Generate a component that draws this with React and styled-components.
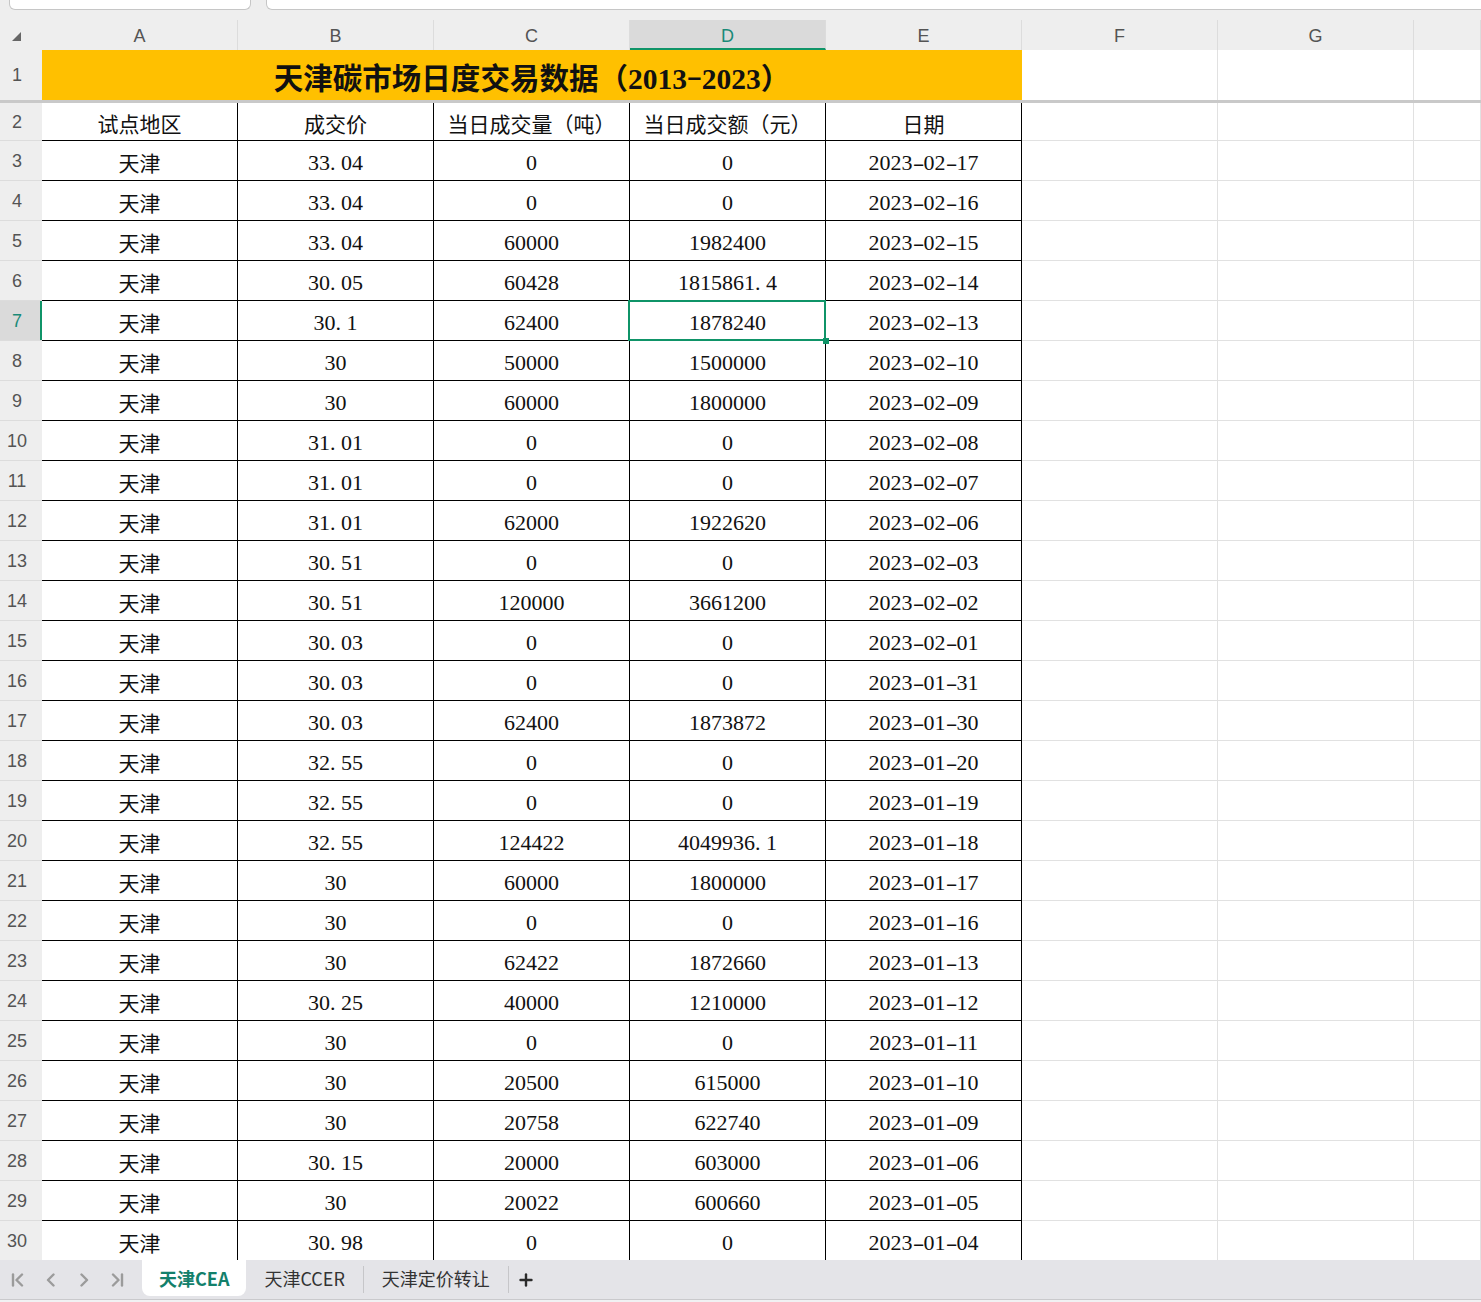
import React from "react";
import styled, { createGlobalStyle, css } from "styled-components";

const GlobalStyle = createGlobalStyle`
  html, body {
    margin: 0;
    padding: 0;
    overflow: hidden;
    background: #ffffff;
  }
  body {
    font-family: "Liberation Sans", "Noto Sans CJK SC", sans-serif;
    text-spacing-trim: space-all;
  }
`;

const COLS = "42px repeat(7, 196px) 1fr";
const GREEN = "#0f9468";
const TEAL = "#1a8a78";

const Page = styled.div`
  display: flex;
  flex-direction: column;
  height: 100vh;
  width: 100vw;
`;

const TopStrip = styled.div`
  display: flex;
  align-items: flex-start;
  gap: 15px;
  height: 20px;
  padding-left: 9px;
  background: #eeeeee;
  overflow: hidden;
  flex-shrink: 0;
`;

const InputBox = styled.div`
  height: 9px;
  background: #ffffff;
  border: 1px solid #c6c6c6;
  border-top: none;
  border-radius: 0 0 6px 6px;
  ${(p) =>
    p.$wide
      ? css`
          flex: 1;
          margin-right: -12px;
        `
      : css`
          width: 240px;
        `}
`;

const Sheet = styled.div`
  flex: 1;
  overflow: hidden;
  background: #ffffff;
`;

const Row = styled.div`
  display: grid;
  grid-template-columns: ${COLS};
  height: ${(p) => p.$h}px;
`;

const HeaderRow = styled(Row)`
  background: #eeeeee;
`;

const Corner = styled.div`
  display: flex;
  align-items: center;
  padding-left: 12px;
  padding-top: 2px;
`;

const ColHead = styled.div`
  display: flex;
  align-items: center;
  justify-content: center;
  padding-top: 2px;
  border-right: 1px solid #dcdcdc;
  font-size: 18px;
  color: #545454;
  box-sizing: border-box;
  ${(p) =>
    p.$active &&
    css`
      background: #dadada;
      color: ${TEAL};
      border-bottom: 2px solid ${GREEN};
      padding-top: 4px;
    `}
`;

const RowHead = styled.div`
  display: flex;
  align-items: center;
  justify-content: center;
  padding-right: 8px;
  padding-top: 2px;
  background: #eeeeee;
  border-bottom: 1px solid ${(p) => (p.$last ? "transparent" : "#dcdcdc")};
  font-size: 18px;
  color: #545454;
  box-sizing: border-box;
  ${(p) =>
    p.$active &&
    css`
      background: #dadada;
      color: ${TEAL};
      box-shadow: inset -2px 0 0 ${GREEN};
    `}
`;

const Cell = styled.div`
  position: relative;
  display: flex;
  align-items: center;
  justify-content: center;
  padding-top: ${(p) => (p.$text ? 2 : 4)}px;
  box-sizing: border-box;
  font-family: "Liberation Serif", "Noto Sans CJK SC", serif;
  font-size: ${(p) => (p.$text ? 21 : 22)}px;
  color: #111111;
  white-space: nowrap;
  border-right: 1px solid ${(p) => (p.$blank ? "#e1e1e1" : "#000000")};
  border-bottom: 1px solid ${(p) => (p.$blank ? "#e1e1e1" : "#000000")};
  ${(p) =>
    p.$selected &&
    css`
      &::after {
        content: "";
        position: absolute;
        top: -1px;
        left: -2px;
        right: -1px;
        bottom: -1px;
        border: 2px solid ${GREEN};
        pointer-events: none;
      }
      &::before {
        content: "";
        position: absolute;
        right: -4px;
        bottom: -4px;
        width: 6px;
        height: 6px;
        background: ${GREEN};
        z-index: 2;
      }
    `}
`;

const TitleCell = styled.div`
  grid-column: span 5;
  display: flex;
  align-items: center;
  justify-content: center;
  padding-top: 2px;
  box-sizing: border-box;
  background: #ffc000;
  font-family: "Liberation Serif", "Noto Sans CJK SC", serif;
  font-weight: 700;
  font-size: 29.5px;
  color: #111111;
`;

const BlankTop = styled.div`
  border-right: 1px solid #e1e1e1;
`;

const FreezeLine = styled.div`
  height: 3px;
  background: #c9c9c9;
`;

const Dot = styled.span`
  display: inline-block;
  width: 0.5em;
  text-align: left;
`;

const Dash = styled.span`
  display: inline-block;
  width: 0.5em;
  text-align: center;
  transform: scaleX(1.6);
`;

const TabBar = styled.div`
  display: flex;
  align-items: flex-start;
  height: 39px;
  background: #e4e4e8;
  border-bottom: 1px solid #c9c9cc;
  flex-shrink: 0;
`;

const TabFoot = styled.div`
  height: 2px;
  background: #f1f1f3;
  flex-shrink: 0;
`;

const NavGroup = styled.div`
  display: flex;
  align-items: center;
  height: 39px;
  width: 142px;
  padding-left: 11px;
  gap: 19px;
  box-sizing: border-box;
  color: #9b9b9b;
`;

const NavBtn = styled.span`
  display: flex;
  width: 14px;
  height: 14px;
`;

const Tab = styled.div`
  display: flex;
  align-items: center;
  height: 36px;
  padding: 0 ${(p) => (p.$active ? 17 : 18)}px;
  font-family: "Noto Sans CJK SC", "Liberation Sans", sans-serif;
  font-size: 18px;
  color: #333333;
  ${(p) =>
    p.$active &&
    css`
      background: #ffffff;
      border-radius: 0 0 8px 8px;
      color: #13806b;
      font-weight: 700;
    `}
`;

const TabSep = styled.div`
  width: 1px;
  height: 27px;
  margin-top: 6px;
  background: #c6c6c9;
`;

const AddBtn = styled.div`
  display: flex;
  align-items: center;
  height: 39px;
  padding-left: 10px;
  color: #2b2b2b;
`;

const rows = [
  ["33.04", "0", "0", "2023-02-17"],
  ["33.04", "0", "0", "2023-02-16"],
  ["33.04", "60000", "1982400", "2023-02-15"],
  ["30.05", "60428", "1815861.4", "2023-02-14"],
  ["30.1", "62400", "1878240", "2023-02-13"],
  ["30", "50000", "1500000", "2023-02-10"],
  ["30", "60000", "1800000", "2023-02-09"],
  ["31.01", "0", "0", "2023-02-08"],
  ["31.01", "0", "0", "2023-02-07"],
  ["31.01", "62000", "1922620", "2023-02-06"],
  ["30.51", "0", "0", "2023-02-03"],
  ["30.51", "120000", "3661200", "2023-02-02"],
  ["30.03", "0", "0", "2023-02-01"],
  ["30.03", "0", "0", "2023-01-31"],
  ["30.03", "62400", "1873872", "2023-01-30"],
  ["32.55", "0", "0", "2023-01-20"],
  ["32.55", "0", "0", "2023-01-19"],
  ["32.55", "124422", "4049936.1", "2023-01-18"],
  ["30", "60000", "1800000", "2023-01-17"],
  ["30", "0", "0", "2023-01-16"],
  ["30", "62422", "1872660", "2023-01-13"],
  ["30.25", "40000", "1210000", "2023-01-12"],
  ["30", "0", "0", "2023-01-11"],
  ["30", "20500", "615000", "2023-01-10"],
  ["30", "20758", "622740", "2023-01-09"],
  ["30.15", "20000", "603000", "2023-01-06"],
  ["30", "20022", "600660", "2023-01-05"],
  ["30.98", "0", "0", "2023-01-04"],
];

const headers = ["试点地区", "成交价", "当日成交量（吨）", "当日成交额（元）", "日期"];
const letters = ["A", "B", "C", "D", "E", "F", "G", ""];

// SimSun-like half width punctuation
function Num({ v }) {
  return (
    <>
      {v.split("").map((ch, i) => {
        if (ch === ".") return <Dot key={i}>.</Dot>;
        if (ch === "-") return <Dash key={i}>-</Dash>;
        return <React.Fragment key={i}>{ch}</React.Fragment>;
      })}
    </>
  );
}

const Icon = ({ children }) => (
  <svg width="14" height="14" viewBox="0 0 14 14" fill="none" stroke="currentColor" strokeWidth="2.4" strokeLinecap="round" strokeLinejoin="round">
    {children}
  </svg>
);

function Blanks({ top }) {
  const Comp = top ? BlankTop : Cell;
  return (
    <>
      <Comp $blank />
      <Comp $blank />
      <Comp $blank />
    </>
  );
}

export default function App() {
  return (
    <Page>
      <GlobalStyle />
      <TopStrip>
        <InputBox />
        <InputBox $wide />
      </TopStrip>

      <Sheet>
        <HeaderRow $h={30}>
          <Corner>
            <svg width="9" height="9" viewBox="0 0 9 9">
              <path d="M9 0 L9 9 L0 9 Z" fill="#666" />
            </svg>
          </Corner>
          {letters.map((l, i) => (
            <ColHead key={i} $active={l === "D"}>
              {l}
            </ColHead>
          ))}
        </HeaderRow>

        <Row $h={50}>
          <RowHead $last>1</RowHead>
          <TitleCell>
            <Num v="天津碳市场日度交易数据（2013-2023）" />
          </TitleCell>
          <Blanks top />
        </Row>
        <FreezeLine />

        <Row $h={38}>
          <RowHead>2</RowHead>
          {headers.map((h) => (
            <Cell key={h} $text>
              {h}
            </Cell>
          ))}
          <Blanks />
        </Row>

        {rows.map((r, i) => {
          const n = i + 3;
          return (
            <Row key={n} $h={40}>
              <RowHead $active={n === 7}>{n}</RowHead>
              <Cell $text>天津</Cell>
              {r.map((v, j) => (
                <Cell key={j} $selected={n === 7 && j === 2}>
                  <Num v={v} />
                </Cell>
              ))}
              <Blanks />
            </Row>
          );
        })}
      </Sheet>

      <TabBar>
        <NavGroup>
          <NavBtn>
            <Icon>
              <path d="M2 1.5 V12.5" />
              <path d="M11 1.5 L5.5 7 L11 12.5" />
            </Icon>
          </NavBtn>
          <NavBtn>
            <Icon>
              <path d="M9.5 1.5 L4 7 L9.5 12.5" />
            </Icon>
          </NavBtn>
          <NavBtn>
            <Icon>
              <path d="M4.5 1.5 L10 7 L4.5 12.5" />
            </Icon>
          </NavBtn>
          <NavBtn>
            <Icon>
              <path d="M3 1.5 L8.5 7 L3 12.5" />
              <path d="M12 1.5 V12.5" />
            </Icon>
          </NavBtn>
        </NavGroup>
        <Tab $active>天津CEA</Tab>
        <Tab>天津CCER</Tab>
        <TabSep />
        <Tab>天津定价转让</Tab>
        <TabSep />
        <AddBtn>
          <Icon>
            <path d="M7 1.5 V12.5" />
            <path d="M1.5 7 H12.5" />
          </Icon>
        </AddBtn>
      </TabBar>
      <TabFoot />
    </Page>
  );
}
